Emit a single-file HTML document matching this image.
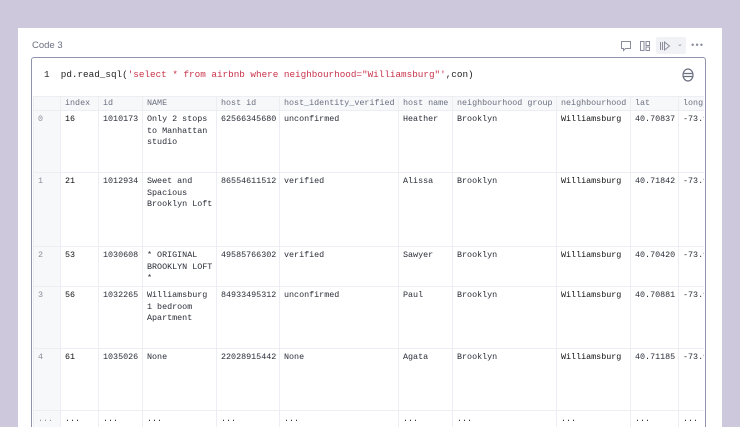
<!DOCTYPE html><html><head><style>
html,body{margin:0;width:740px;height:427px;overflow:hidden}
body{background:#cdc8dc;position:relative;font-family:"Liberation Mono",monospace}
.panel{position:absolute;left:18px;top:28px;width:704px;height:399px;background:#fff}
.title{position:absolute;left:32px;top:40px;font:9.5px "Liberation Sans",sans-serif;color:#6b6f80}
.cell{position:absolute;left:31px;top:57px;width:673px;height:380px;border:1.5px solid #8f93ad;border-radius:3px;background:#fff}
.code{position:absolute;left:44px;top:69px;font-size:9.3px;color:#222;white-space:pre}
.code .s{color:#c8324a}
.clip{position:absolute;left:33px;top:96px;width:671px;height:331px;overflow:hidden}
table{border-collapse:collapse;table-layout:fixed;width:685px;font-size:8.4px;color:#2a2d38}
td{border:1px solid #eceef4;vertical-align:top;padding:3px 4px 0 4px;line-height:11.5px;overflow:hidden;white-space:nowrap}
tr.h td{background:#f7f8fa;color:#6b6f80;height:12px;padding-top:1px}
td.i{background:#f7f8fa;color:#8a8e9c}
.b{color:#111}
.icons{position:absolute;top:40px;color:#8a8e9c}
</style></head><body>
<div class="panel"></div>
<div class="title">Code 3</div>
<svg class="icons" style="left:620px" width="12" height="12" viewBox="0 0 12 12" fill="none" stroke="#8a8e9c" stroke-width="1"><path d="M1.5 1.5h9v7h-5l-2 2v-2h-2z"/></svg>
<svg class="icons" style="left:639px" width="12" height="12" viewBox="0 0 12 12" fill="none" stroke="#8a8e9c" stroke-width="1"><rect x="1.5" y="1.5" width="3.5" height="9"/><rect x="7" y="1.5" width="3.5" height="4"/><rect x="7" y="7" width="3.5" height="3.5"/></svg>
<div style="position:absolute;left:656px;top:37px;width:30px;height:17px;background:#f1f2f5;border-radius:2px"></div>
<svg class="icons" style="left:659px" width="12" height="12" viewBox="0 0 12 12" fill="none" stroke="#8a8e9c" stroke-width="1"><path d="M1.5 2v8M3.5 2v8M5.5 2l5 4-5 4z"/></svg>
<div style="position:absolute;left:677px;top:40px;font-size:7px;color:#8a8e9c">⌄</div>
<div style="position:absolute;left:690px;top:41px;font-size:9px;color:#8a8e9c;letter-spacing:-1px">•••</div>
<div class="cell"></div>
<div class="code">1  pd.read_sql(<span class="s">'select * from airbnb where neighbourhood="Williamsburg"'</span>,con)</div>
<svg style="position:absolute;left:681px;top:67px" width="14" height="16" viewBox="0 0 14 16" fill="none" stroke="#6b6f80" stroke-width="1.2"><ellipse cx="7" cy="8" rx="5" ry="6"/><path d="M2 6.5h10M2 9.5h10"/></svg>
<div class="clip"><table>
<colgroup><col style="width:27px"><col style="width:38px"><col style="width:44px"><col style="width:74px"><col style="width:63px"><col style="width:119px"><col style="width:54px"><col style="width:104px"><col style="width:74px"><col style="width:48px"><col style="width:40px"></colgroup>
<tr class="h"><td></td><td>index</td><td>id</td><td>NAME</td><td>host id</td><td>host_identity_verified</td><td>host name</td><td>neighbourhood group</td><td>neighbourhood</td><td>lat</td><td>long</td></tr>
<tr style="height:62px"><td class="i">0</td><td class="b">16</td><td>1010173</td><td>Only 2 stops<br>to Manhattan<br>studio</td><td>62566345680</td><td>unconfirmed</td><td>Heather</td><td>Brooklyn</td><td class="b">Williamsburg</td><td>40.70837</td><td>-73.9</td></tr>
<tr style="height:74px"><td class="i">1</td><td class="b">21</td><td>1012934</td><td>Sweet and<br>Spacious<br>Brooklyn Loft</td><td>86554611512</td><td>verified</td><td>Alissa</td><td>Brooklyn</td><td class="b">Williamsburg</td><td>40.71842</td><td>-73.9</td></tr>
<tr style="height:40px"><td class="i">2</td><td class="b">53</td><td>1030608</td><td>* ORIGINAL<br>BROOKLYN LOFT<br>*</td><td>49585766302</td><td>verified</td><td>Sawyer</td><td>Brooklyn</td><td class="b">Williamsburg</td><td>40.70420</td><td>-73.9</td></tr>
<tr style="height:62px"><td class="i">3</td><td class="b">56</td><td>1032265</td><td>Williamsburg<br>1 bedroom<br>Apartment</td><td>84933495312</td><td>unconfirmed</td><td>Paul</td><td>Brooklyn</td><td class="b">Williamsburg</td><td>40.70881</td><td>-73.9</td></tr>
<tr style="height:62px"><td class="i">4</td><td class="b">61</td><td>1035026</td><td>None</td><td>22028915442</td><td>None</td><td>Agata</td><td>Brooklyn</td><td class="b">Williamsburg</td><td>40.71185</td><td>-73.9</td></tr>
<tr style="height:20px"><td class="i">...</td><td>...</td><td>...</td><td>...</td><td>...</td><td>...</td><td>...</td><td>...</td><td>...</td><td>...</td><td>...</td></tr>
</table></div>
</body></html>
